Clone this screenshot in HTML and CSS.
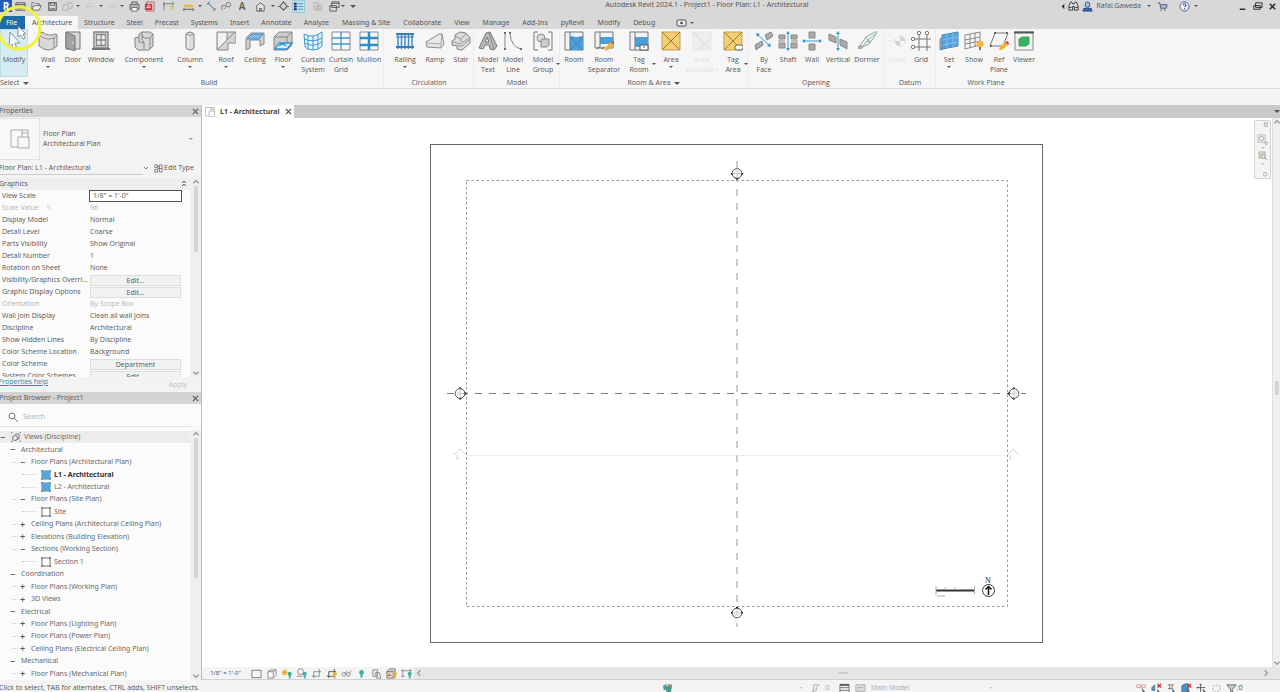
FILE: index.html
```html
<!DOCTYPE html>
<html lang="en">
<head>
<meta charset="utf-8">
<title>Autodesk Revit 2024.1 - Project1 - Floor Plan: L1 - Architectural</title>
<link rel="stylesheet" href="styles.css">
</head>
<body>
<svg class="defs" aria-hidden="true">
  <symbol id="plan" viewBox="0 0 20 20"><path d="M1 1h17v7h1v11H8v-1H1zM12 1v3h6M8 18V8h11M12 4v4" fill="none" stroke="currentColor"/></symbol>
  <symbol id="x" viewBox="0 0 8 8"><path d="M1 1l6 6M7 1L1 7" stroke="currentColor" stroke-width="1.2"/></symbol>
  <symbol id="bulb" viewBox="0 0 5 8"><circle cx="2.5" cy="2.5" r="2.3"/><path d="M1.5 4h2v3.5h-2z"/></symbol>
  <symbol id="elev" viewBox="-10 -10 20 20"><path d="M-6 0L0-6L6 0z" fill="#111" stroke="#111"/><circle r="4.800" fill="#fff" stroke="#444" stroke-width=".9"/><path d="M-4 0H4M0-4V0M-2 2h4" stroke="#aaa" stroke-width=".7"/></symbol>
  <symbol id="sheet" viewBox="0 0 10 10"><rect x="1" y="1" width="8" height="8" fill="#fff" stroke="#999" stroke-width="1.4"/><path d="M0 0h2v2H0zM8 0h2v2H8zM0 8h2v2H0zM8 8h2v2H8z" fill="#888"/></symbol>
  <symbol id="sheet-on" viewBox="0 0 10 10"><rect x="1" y="1" width="8" height="8" fill="#55a8df" stroke="#5f9cc5" stroke-width="1.2"/><path d="M0 0h2v2H0zM8 0h2v2H8zM0 8h2v2H0zM8 8h2v2H8z" fill="#799"/></symbol>
</svg>

<header class="top">
  <div class="titlebar">
    <div class="qat">
      <button class="logo" aria-label="Revit">R</button>
      <button aria-label="Home"><svg viewBox="0 0 12 12"><path d="M1 2h10v8H1zM1 4h10M4 4v6M5 6h5M5 8h5" fill="none" stroke="#555"/></svg></button>
      <button aria-label="Open"><svg viewBox="0 0 12 12"><path d="M1 10V2h3l1 1h4v2M1 10l2-5h8l-2 5z" fill="#eee" stroke="#666"/></svg></button>
      <button aria-label="Save"><svg viewBox="0 0 12 12"><path d="M2 2h8v8H2z" fill="#eee" stroke="#555" stroke-width="1.3"/><path d="M4 2v3h4V2M3.500 8h5" fill="none" stroke="#555"/></svg></button>
      <button class="dim" aria-label="Synchronize"><svg viewBox="0 0 12 12"><path d="M1 4h6v6H1zM5 2h6v6H8" fill="none" stroke="#888"/></svg></button>
      <button class="caret" aria-label="Synchronize options"></button>
      <button class="faint" aria-label="Undo"><svg viewBox="0 0 12 12"><path d="M4 3L1 6l3 2M1 6h9" fill="none" stroke="#888"/></svg></button>
      <button class="caret" aria-label="Undo list"></button>
      <button class="faint" aria-label="Redo"><svg viewBox="0 0 12 12"><path d="M8 3l3 3-3 2M11 6H2" fill="none" stroke="#888"/></svg></button>
      <button class="caret" aria-label="Redo list"></button>
      <button aria-label="Print"><svg viewBox="0 0 12 12"><path d="M3 4V1h6v3M1 4h10v5H1z" fill="#bcbcc8" stroke="#666"/><path d="M3 7h6v4H3z" fill="#fff" stroke="#666"/></svg></button>
      <button aria-label="Export PDF"><svg viewBox="0 0 12 12"><path d="M3 1h8v10H3z" fill="#e8dada" stroke="#a66"/><path d="M1 3h8v7H1z" fill="#cf3a3e"/><path d="M3 8l2-4 2 3H3" fill="none" stroke="#fff" stroke-width=".8"/></svg></button>
      <button aria-label="Measure"><svg viewBox="0 0 12 12"><path d="M1 10V3h10M1 1v4M11 1v4" fill="none" stroke="#777"/><path d="M8 6h3l-1 4" fill="none" stroke="#d9a030"/></svg></button>
      <button aria-label="Measure between"><svg viewBox="0 0 12 12"><path d="M1 4h10v3H1z" fill="#e7b84b"/><path d="M1 9h10M1 8v3M11 8v3" stroke="#555"/></svg></button>
      <button class="caret" aria-label="Measure options"></button>
      <button aria-label="Aligned dimension"><svg viewBox="0 0 12 12"><path d="M2 2l8 8M1 4l3-3M8 11l3-3" stroke="#5a8fb0" stroke-width="1.1"/></svg></button>
      <button aria-label="Tag by category"><svg viewBox="0 0 12 12"><circle cx="8" cy="4" r="2.500" fill="none" stroke="#777"/><path d="M1 10V5h4M6 6L3 9" fill="none" stroke="#777"/></svg></button>
      <button class="text-tool" aria-label="Text">A</button>
      <button aria-label="Default 3D view"><svg viewBox="0 0 12 12"><path d="M1 6l5-4 5 4M2 6v5h8V6M5 11V8h2v3" fill="#e9e9e9" stroke="#555"/></svg></button>
      <button class="caret" aria-label="3D view options"></button>
      <button aria-label="Section"><svg viewBox="0 0 12 12"><path d="M6 1l4 5-4 4-4-4z" fill="none" stroke="#666" stroke-width="1.300"/><path d="M0 6h2M10 6h2" stroke="#666"/></svg></button>
      <button class="on" aria-label="Thin lines"><svg viewBox="0 0 12 12"><path d="M1 3h3M1 6h3M1 9h3" stroke="#226" stroke-width="2"/><path d="M5 3h6M5 6h6M5 9h6" stroke="#4b9bb8"/></svg></button>
      <button class="dim" aria-label="Close inactive views"><svg viewBox="0 0 12 12"><path d="M2 2h5v7H2zM5 5h5v5H5zM6 6l3 3" fill="none" stroke="#888"/></svg></button>
      <button aria-label="Switch windows"><svg viewBox="0 0 12 12"><path d="M3 1h8v6H3zM1 5h7v6H1z" fill="#ddd" stroke="#555"/><path d="M3 2.500h8" stroke="#555"/></svg></button>
      <button class="caret" aria-label="Window list"></button>
      <button class="caret big" aria-label="Customize toolbar"></button>
    </div>
    <h1 class="title">Autodesk Revit 2024.1 - Project1 - Floor Plan: L1 - Architectural</h1>
    <div class="account">
      <button aria-label="Collapse search"><svg viewBox="0 0 12 12"><path d="M8 3v6L5 6z" fill="#333"/></svg></button>
      <button aria-label="Search"><svg viewBox="0 0 12 12"><path d="M1 10V5l2-4h1l1 2h2l1-2h1l2 4v5H7V6H5v4zM1 7h3M8 7h3" fill="#ddd" stroke="#333"/></svg></button>
      <button class="user"><svg viewBox="0 0 12 12"><path d="M3.500 4q0-3 2.500-3t2.500 3-2.500 3-2.500-3z" fill="#a9bfe6" stroke="#2c4c95"/><path d="M1 11l1-3h8l1 3z" fill="#3d66b8" stroke="#24427f"/></svg>Rafal.Gaweda</button>
      <button class="caret" aria-label="Account menu"></button>
      <button class="cart" aria-label="App store"><svg viewBox="0 0 12 12"><path d="M1 2h2l1 6h6l1-4H4" fill="#aab8d6" stroke="#4a5a83"/><path d="M4 10h1M8 10h1" stroke="#334" stroke-width="1.500"/></svg></button>
      <button class="help" aria-label="Help"><svg viewBox="0 0 12 12"><circle cx="6" cy="6" r="5" fill="#f0f3fa" stroke="#445a8c"/><path d="M4.500 4.500q0-1.500 1.500-1.500t1.500 1.500q0 1-1.500 1.800M6 8v1.200" fill="none" stroke="#2d4fa0" stroke-width="1.200"/></svg></button>
      <button class="caret" aria-label="Help menu"></button>
      <button class="win first" aria-label="Minimize"><svg viewBox="0 0 12 12"><path d="M3 9h6" stroke="#222" stroke-width="1.500"/></svg></button>
      <button class="win" aria-label="Restore"><svg viewBox="0 0 12 12"><path d="M4 2h7v5H4zM2 5h7v4H2z" fill="#ddd" stroke="#222"/></svg></button>
      <button class="win" aria-label="Close"><svg viewBox="0 0 12 12"><path d="M3 3l6 6M9 3L3 9" stroke="#222" stroke-width="1.400"/></svg></button>
    </div>
  </div>
  <nav class="tabs">
    <button class="file">File</button>
    <button class="active">Architecture</button>
    <button>Structure</button><button>Steel</button><button>Precast</button><button>Systems</button><button>Insert</button><button>Annotate</button><button>Analyze</button><button>Massing &amp; Site</button><button>Collaborate</button><button>View</button><button>Manage</button><button>Add-Ins</button><button>pyRevit</button><button>Modify</button><button>Debug</button>
    <button class="state" aria-label="Ribbon state"><svg viewBox="0 0 12 8"><rect x="1" y="1" width="9" height="6" rx="1" fill="#eee" stroke="#555"/><circle cx="5.500" cy="4" r="1.200" fill="#333"/></svg><i class="tri"></i></button>
  </nav>
</header>

<section class="ribbon">
  <div class="panel select">
    <div class="tools"><button class="chosen"><svg viewBox="0 0 20 20"><path d="M6 1l10 11-5 0 2 6-3 1-2-6-3 3z" fill="#f4fafc" stroke="#8497a0"/></svg>Modify</button></div>
    <h2>Select <i class="tri big"></i></h2>
  </div>
  <div class="panel build">
    <div class="tools">
      <button><svg viewBox="0 0 20 20"><path d="M1 4l3-3q7 5 13 2l2 1v11q-3 4-9 4-4 0-9-4z" fill="#d9d9d9" stroke="#808080"/><path d="M1 4q7 6 15 3v10M16 7l3-3" fill="none" stroke="#909090"/></svg>Wall<i class="tri"></i></button>
      <button><svg viewBox="0 0 20 20"><path d="M3 1h14v17H3z" fill="#d8d8d8" stroke="#777"/><path d="M3 1l9 4v15l-9-3z" fill="#a2a2a2" stroke="#777"/><path d="M10 11v2" stroke="#eee"/></svg>Door</button>
      <button><svg viewBox="0 0 20 20"><path d="M3 1h14v16H3z" fill="#d9d9d9" stroke="#888" stroke-width="1.500"/><path d="M5.500 3.500h9v11h-9zM10 3v12M5 9h10" fill="#eee" stroke="#888" stroke-width="1.300"/><path d="M1 18h18" stroke="#777" stroke-width="2"/></svg>Window</button>
      <button><svg viewBox="0 0 20 20"><path d="M1 7l4-1V3l3-2h8l3 2v12l-4 4H4l-3-3z" fill="#d8d8d8" stroke="#808080"/><path d="M8 1v8l2 2v7M5 6v5l5 1M10 7h6l3-4M16 7v11M10 7L8 4" fill="none" stroke="#888"/></svg>Component<i class="tri"></i></button>
      <button><svg viewBox="0 0 20 20"><path d="M6 3q4-4 8 0v14q-4 4-8 0z" fill="#ddd" stroke="#808080"/><path d="M8 4v13" stroke="#f6f6f6"/><path d="M6 3q4 3 8 0" fill="none" stroke="#999"/></svg>Column<i class="tri"></i></button>
      <button><svg viewBox="0 0 20 20"><path d="M1 1h19v11h-8v7H1z" fill="#d4d4d4" stroke="#888"/><path d="M2 18V2h9v7z" fill="#f2f2f2"/><path d="M1 19l10-10V1M11 9l8-8" fill="none" stroke="#888"/></svg>Roof<i class="tri"></i></button>
      <button><svg viewBox="0 0 20 20"><path d="M1 7l5-5h13v11l-4 2V9H5v8l-4 2z" fill="#d0d0d0" stroke="#888"/><path d="M2 8l5-5h11l-4 5z" fill="#7fbde6" stroke="#3f8fc5"/></svg>Ceiling</button>
      <button><svg viewBox="0 0 20 20"><path d="M1 6l5-5h13v13l-5 5H1z" fill="#ccc" stroke="#888"/><path d="M1 6h13v6M14 6l5-5" fill="none" stroke="#888"/><path d="M2 18l4-6h13l-5 6zM6 15q4-4 7 0" fill="#d9effb" stroke="#2f91d2" stroke-width="1.300"/></svg>Floor<i class="tri"></i></button>
      <button><svg viewBox="0 0 20 20"><path d="M1 3q9 5 18-2v14q-3 4-9 4T2 16z" fill="#e8f4fb" stroke="#3e96cb"/><path d="M5 4v14M10 5v14M15 3v15M1 8q9 4 18-1M2 12q8 5 17-1" fill="none" stroke="#3e96cb"/></svg>Curtain System</button>
      <button><svg viewBox="0 0 20 20"><path d="M1 1h18v18H1z" fill="#f8f8f8" stroke="#888"/><path d="M1 7h18M1 13h18M10 1v18" stroke="#3f97d0" stroke-width="1.300"/></svg>Curtain Grid</button>
      <button><svg viewBox="0 0 20 20"><path d="M1 1h18v18H1z" fill="#f8f8f8" stroke="#888"/><path d="M1 7h18M1 14h18M10 1v18" stroke="#338bc7" stroke-width="2.500"/></svg>Mullion</button>
    </div>
    <h2>Build</h2>
  </div>
  <div class="panel circulation">
    <div class="tools">
      <button><svg viewBox="0 0 20 20"><path d="M3 3v15M6.500 3v15M10 3v15M13.500 3v15M17 3v15" stroke="#3a8fc9" stroke-width="1.500"/><path d="M1 3h18M1 16h18" stroke="#3a7dad" stroke-width="2"/><path d="M1 6h18" stroke="#3a7dad"/></svg>Railing<i class="tri"></i></button>
      <button><svg viewBox="0 0 20 20"><path d="M1 11l13-8h3l2 10-3 4-14-1z" fill="#e8e8e8" stroke="#888"/><path d="M1 12l15 1 1-10M16 13v4" fill="none" stroke="#aaa"/></svg>Ramp</button>
      <button><svg viewBox="0 0 20 20"><path d="M1 10l3-2 0-4 5-3 6 1 4 5v5l-8 7-5-1v-3l-5-1z" fill="#dcdcdc" stroke="#808080"/><path d="M4 5l6 3 5-5M2 11l7 2 9-6M6 15l5 0 7-6M10 8v3" fill="none" stroke="#999"/></svg>Stair</button>
    </div>
    <h2>Circulation</h2>
  </div>
  <div class="panel model">
    <div class="tools">
      <button><svg viewBox="0 0 20 20"><path d="M8 2l4-1 7 14-3 4-4-1-1-4H7l-2 4-4-1z" fill="#b9b9b9" stroke="#777"/><path d="M9 6l2 5H7z" fill="#eee" stroke="#777"/><path d="M11 2l5 16" stroke="#888"/></svg>Model Text</button>
      <button><svg viewBox="0 0 20 20"><path d="M1 1h2v2H1zM1 17h2v2H1zM6 1h2v2H6zM17 17h2v2h-2z" fill="#666"/><path d="M2 2v16M7 2q1 14 11 16" fill="none" stroke="#888"/></svg>Model Line</button>
      <button class="side"><svg viewBox="0 0 20 20"><path d="M5 1H1v18h4M15 1h4v18h-4" fill="none" stroke="#777"/><circle cx="8" cy="7" r="4" fill="#ddd" stroke="#888"/><path d="M8 9l2-1h6v6l-2 2H8z" fill="#ccc" stroke="#888"/></svg>Model Group<i class="tri"></i></button>
    </div>
    <h2>Model</h2>
  </div>
  <div class="panel room">
    <div class="tools">
      <button><svg viewBox="0 0 20 20"><path d="M1 1h18v18H1z" fill="#f2f2f2" stroke="#777"/><path d="M6 6h13v13H6z" fill="#4b9fda" /><path d="M6 1v18M6 6h4M15 6h4M6 6l13 13M19 6L6 19" fill="none" stroke="#3f7ea9"/></svg>Room</button>
      <button class="wide"><svg viewBox="0 0 20 20"><path d="M1 1h18v16H1z" fill="#f2f2f2" stroke="#777"/><path d="M6 6h13v7H6z" fill="#4b9fda"/><path d="M6 1v16" stroke="#777"/><path d="M3 18l2-2M8 18l2-2" stroke="#6b7b52" stroke-width="1.500"/><path d="M11 17l6-6 3 3-6 5-3 1z" fill="#efb33d"/><path d="M17 11l3-1v4z" fill="#e4433a"/></svg>Room Separator</button>
      <button class="side"><svg viewBox="0 0 20 20"><path d="M1 1h18v18H1z" fill="#f2f2f2" stroke="#777"/><path d="M6 6h13v10H6z" fill="#4b9fda"/><path d="M6 1v18" stroke="#777"/><rect x="11" y="14" width="8" height="5" fill="#fff" stroke="#555"/><path d="M14 16h2" stroke="#555"/></svg>Tag Room<i class="tri"></i></button>
      <button><svg viewBox="0 0 20 20"><path d="M1 1h18v18H1z" fill="#f8ce72" stroke="#bd9f60"/><path d="M1 1l18 18M19 1L1 19" stroke="#9a7c3c"/></svg>Area<i class="tri"></i></button>
      <button class="disabled wide" disabled><svg viewBox="0 0 20 20"><path d="M1 1h18v18H1z" fill="#ccc" stroke="#aaa"/><path d="M1 1l18 18M19 6L6 19" stroke="#999" stroke-width="2"/></svg>Area Boundary</button>
      <button class="side"><svg viewBox="0 0 20 20"><path d="M1 1h18v18H1z" fill="#f8ce72" stroke="#bd9f60"/><path d="M1 1l18 18M19 1L1 19" stroke="#9a7c3c"/><rect x="12" y="14" width="8" height="5" rx="2" fill="#fff" stroke="#666"/></svg>Tag Area<i class="tri"></i></button>
    </div>
    <h2>Room &amp; Area <i class="tri big"></i></h2>
  </div>
  <div class="panel opening">
    <div class="tools">
      <button><svg viewBox="0 0 20 20"><path d="M11 4l6-3 2 4-6 4zM1 14l7-4 1 4-7 5z" fill="#aaa" stroke="#888"/><path d="M3 3l13 12" stroke="#359bcf"/><path d="M2 2l4 1-3 3zM17 16l-4-1 3-3z" fill="#359bcf"/></svg>By Face</button>
      <button><svg viewBox="0 0 20 20"><path d="M1 4h6v4H1zM1 12h6v5H1zM13 4h6v4h-6zM13 12h6v5h-6z" fill="#aaa" stroke="#888"/><path d="M0 10h7M13 10h7" stroke="#888"/><path d="M10 2v16" stroke="#359bcf"/><path d="M10 0l2 3H8zM10 20l2-3H8z" fill="#359bcf"/></svg>Shaft</button>
      <button><svg viewBox="0 0 20 20"><path d="M7 1h6v6H7zM7 13h6v6H7z" fill="#aaa" stroke="#888"/><path d="M1 10h18" stroke="#359bcf"/><path d="M0 10l3-2v4zM20 10l-3-2v4z" fill="#359bcf"/></svg>Wall</button>
      <button><svg viewBox="0 0 20 20"><path d="M1 3l7 3v6l-7-3zM12 8l7 3v7l-7-4z" fill="#aaa" stroke="#888"/><path d="M10 2v16" stroke="#359bcf"/><path d="M10 0l2 3H8zM10 20l2-3H8z" fill="#359bcf"/></svg>Vertical</button>
      <button><svg viewBox="0 0 20 20"><path d="M1 18L9 6l9-5h2l-2 4-6 8zM4 18l6-8 3 2" fill="none" stroke="#94a09c"/><path d="M9 6l4 5M9 11l9-8" stroke="#6fb8b8"/><path d="M1 15l4-1v4H1z" fill="#aaa"/></svg>Dormer</button>
    </div>
    <h2>Opening</h2>
  </div>
  <div class="panel datum">
    <div class="tools">
      <button class="disabled" disabled><svg viewBox="0 0 20 20"><path d="M1 5h5M1 10h8" stroke="#aaa"/><circle cx="13" cy="10" r="5" fill="#fff" stroke="#777"/><path d="M13 10V5a5 5 0 0 1 5 5zM13 10v5a5 5 0 0 1-5-5z" fill="#333"/></svg>Level</button>
      <button><svg viewBox="0 0 20 20"><path d="M8 4v16M16 4v16M4 8h16M4 16h16" stroke="#777"/><g fill="#fff" stroke="#777"><circle cx="8" cy="2" r="1.700"/><circle cx="16" cy="2" r="1.700"/><circle cx="2" cy="8" r="1.700"/><circle cx="2" cy="16" r="1.700"/></g></svg>Grid</button>
    </div>
    <h2>Datum</h2>
  </div>
  <div class="panel workplane">
    <div class="tools">
      <button><svg viewBox="0 0 20 20"><path d="M1 8l14-6v12L1 19z" fill="#a6b9c6" stroke="#789"/><path d="M3 4l16-3v14L3 18z" fill="#4c9fd9" fill-opacity=".9" stroke="#3f88bd"/><path d="M8 3v14M14 2v14M3 9l16-3M3 14l16-3" stroke="#8cc7ec" stroke-width=".8"/></svg>Set<i class="tri"></i></button>
      <button><svg viewBox="0 0 20 20"><path d="M1 4l15-3v13L1 18zM6 3v14M11 2v14M1 9l15-3M1 13l15-3" fill="none" stroke="#888"/><circle cx="16" cy="13" r="3.500" fill="#f5b63b"/><path d="M15 16h2v3h-2z" fill="#777"/></svg>Show</button>
      <button><svg viewBox="0 0 20 20"><path d="M6 2h13l-5 13H1z" fill="none" stroke="#777"/><path d="M5 1h2v2H5zM17 1h2v2h-2zM1 14h2v2H1z" fill="#666"/><path d="M10 19l1-3 5-5 3 3-6 5z" fill="#eeb43d"/><path d="M16 11l3-1 1 3-1 1z" fill="#e03c37"/></svg>Ref Plane</button>
      <button><svg viewBox="0 0 20 20"><path d="M1 1h18v18H1z" fill="#f4f4f4" stroke="#888"/><path d="M0 1.500h20" stroke="#555" stroke-width="2"/><path d="M5 8l3-2h7v7l-3 2H5z" fill="#35b461" stroke="#39a761"/></svg>Viewer</button>
    </div>
    <h2>Work Plane</h2>
  </div>
</section>
<div class="options"></div>

<main class="work">
  <aside class="side-dock">
    <section class="properties">
      <header class="dock-head"><h2>Properties</h2><button aria-label="Close properties"><svg><use href="#x"/></svg></button></header>
      <button class="type"><span class="thumb"><svg><use href="#plan"/></svg></span><span class="type-name">Floor Plan<br>Architectural Plan</span><i class="tri"></i></button>
      <div class="instance">
        <select aria-label="Instance"><option>Floor Plan: L1 - Architectural</option></select>
        <svg class="chev" viewBox="0 0 6 6"><path d="M1 2l2 2 2-2" fill="none" stroke="#777"/></svg>
        <button class="edit-type"><svg viewBox="0 0 10 10"><path d="M1 1h3v3H1zM1 6h3v3H1zM6 1h3v8H6zM4 5h5M4 3h2" fill="none" stroke="#777"/></svg>Edit Type</button>
      </div>
      <div class="params">
        <div class="param-list">
          <div class="group"><span>Graphics</span><svg viewBox="0 0 6 6"><path d="M1 3l2-2 2 2M1 6l2-2 2 2" fill="none" stroke="#555"/></svg></div>
          <table>
            <tr><th><label for="scale">View Scale</label></th><td><input id="scale" value="1/8&quot; = 1'-0&quot;"></td></tr>
            <tr class="off"><th>Scale Value &nbsp;&nbsp; 1:</th><td>96</td></tr>
            <tr><th>Display Model</th><td>Normal</td></tr>
            <tr><th>Detail Level</th><td>Coarse</td></tr>
            <tr><th>Parts Visibility</th><td>Show Original</td></tr>
            <tr><th>Detail Number</th><td>1</td></tr>
            <tr><th>Rotation on Sheet</th><td>None</td></tr>
            <tr><th>Visibility/Graphics Overri...</th><td><button>Edit...</button></td></tr>
            <tr><th>Graphic Display Options</th><td><button>Edit...</button></td></tr>
            <tr class="off"><th>Orientation</th><td>By Scope Box</td></tr>
            <tr><th>Wall Join Display</th><td>Clean all wall joins</td></tr>
            <tr><th>Discipline</th><td>Architectural</td></tr>
            <tr><th>Show Hidden Lines</th><td>By Discipline</td></tr>
            <tr><th>Color Scheme Location</th><td>Background</td></tr>
            <tr><th>Color Scheme</th><td><button>Department</button></td></tr>
            <tr><th>System Color Schemes</th><td><button>Edit...</button></td></tr>
          </table>
        </div>
        <div class="vbar short"><svg viewBox="0 0 6 6"><path d="M1 4l2-2 2 2"/></svg><span></span><svg viewBox="0 0 6 6"><path d="M1 2l2 2 2-2"/></svg></div>
      </div>
      <footer class="prop-foot"><a href="#help">Properties help</a><button disabled>Apply</button></footer>
    </section>
    <section class="browser">
      <header class="dock-head"><h2>Project Browser - Project1</h2><button aria-label="Close browser"><svg><use href="#x"/></svg></button></header>
      <label class="search"><svg viewBox="0 0 10 10"><circle cx="4" cy="4" r="3" fill="none" stroke="#777"/><path d="M6 6l4 4" stroke="#777"/></svg><input type="search" placeholder="Search" aria-label="Search"></label>
      <div class="tree-wrap">
        <ul class="tree">
          <li class="l0 root"><b>−</b><svg viewBox="0 0 10 10"><path d="M0 2V0h2M8 0h2v2M10 8v2H8M2 10H0V8" fill="none" stroke="#888"/><circle cx="4" cy="6" r="2.500" fill="none" stroke="#777"/><path d="M4 2h4v5H6" fill="none" stroke="#777"/></svg>Views (Discipline)</li>
          <li class="l1"><b>−</b>Architectural</li>
          <li class="l2"><b>−</b>Floor Plans (Architectural Plan)</li>
          <li class="l3 current"><svg><use href="#sheet-on"/></svg>L1 - Architectural</li>
          <li class="l3"><svg><use href="#sheet-on"/></svg>L2 - Architectural</li>
          <li class="l2"><b>−</b>Floor Plans (Site Plan)</li>
          <li class="l3"><svg><use href="#sheet"/></svg>Site</li>
          <li class="l2"><b>+</b>Ceiling Plans (Architectural Ceiling Plan)</li>
          <li class="l2"><b>+</b>Elevations (Building Elevation)</li>
          <li class="l2"><b>−</b>Sections (Working Section)</li>
          <li class="l3"><svg><use href="#sheet"/></svg>Section 1</li>
          <li class="l1"><b>−</b>Coordination</li>
          <li class="l2"><b>+</b>Floor Plans (Working Plan)</li>
          <li class="l2"><b>+</b>3D Views</li>
          <li class="l1"><b>−</b>Electrical</li>
          <li class="l2"><b>+</b>Floor Plans (Lighting Plan)</li>
          <li class="l2"><b>+</b>Floor Plans (Power Plan)</li>
          <li class="l2"><b>+</b>Ceiling Plans (Electrical Ceiling Plan)</li>
          <li class="l1"><b>−</b>Mechanical</li>
          <li class="l2"><b>+</b>Floor Plans (Mechanical Plan)</li>
        </ul>
        <div class="vbar mid"><svg viewBox="0 0 6 6"><path d="M1 4l2-2 2 2"/></svg><span></span><svg viewBox="0 0 6 6"><path d="M1 2l2 2 2-2"/></svg></div>
      </div>
    </section>
  </aside>

  <section class="view">
    <div class="view-tabs">
      <div class="view-tab"><svg class="plan"><use href="#plan"/></svg><span>L1 - Architectural</span><button aria-label="Close view"><svg><use href="#x"/></svg></button></div>
      <button class="caret big" aria-label="Tab list"></button>
    </div>
    <div class="view-body">
      <div class="canvas">
        <svg class="drawing" viewBox="430 143 614 500">
          <rect x="430.500" y="144.500" width="612" height="498" fill="none" stroke="#666"/>
          <rect x="466.500" y="180.500" width="541" height="426" fill="none" stroke="#999" stroke-dasharray="2.500 2.500"/>
          <path d="M447 393.500h579" stroke="#7c7c7c" stroke-dasharray="7 7"/>
          <path d="M737 161v466" stroke="#999" stroke-dasharray="7 7"/>
          <path d="M467 455.500h540" stroke="#ddd" stroke-dasharray="1 1"/>
          <path d="M454 455l6-6 6 6M457 455v4h2M1007 455l6-6 6 6M1010 455v4h2" fill="none" stroke="#ddd0cc"/>
          <use href="#elev" x="-10" y="-10" width="20" height="20" transform="translate(737 173.500) rotate(180)"/>
          <use href="#elev" x="-10" y="-10" width="20" height="20" transform="translate(737 613)"/>
          <use href="#elev" x="-10" y="-10" width="20" height="20" transform="translate(460 393.500) rotate(90)"/>
          <use href="#elev" x="-10" y="-10" width="20" height="20" transform="translate(1014 393.500) rotate(-90)"/>
          <path d="M936 590.500h39" stroke="#333" stroke-width="2"/>
          <path d="M936 586v9M945 587v3M955 587v3M974.500 586v8M937 596h8" stroke="#aaa" fill="none"/>
          <text x="988" y="583" text-anchor="middle" class="north">N</text>
          <circle cx="988.500" cy="590.500" r="6" fill="#fff" stroke="#333"/>
          <path d="M988.500 595v-8M985.500 589.500l3-3 3 3" fill="none" stroke="#111" stroke-width="1.500"/>
        </svg>
        <div class="navbar">
          <button aria-label="Close navigation bar"><svg viewBox="0 0 12 12"><path d="M8 2h4v4H8zM9 3l2 2" fill="none" stroke="#aaa"/></svg></button>
          <button aria-label="Steering wheel"><svg viewBox="0 0 12 12"><path d="M1 1h8v8H1z" fill="none" stroke="#bbb"/><circle cx="5" cy="5" r="2.500" fill="none" stroke="#9aabb8"/><circle cx="10" cy="10" r="1.500" fill="none" stroke="#aaa"/></svg></button>
          <i class="tri"></i>
          <button aria-label="Zoom"><svg viewBox="0 0 12 12"><path d="M2 2h7v7H2z" fill="#d6d3b8" stroke="#c0c0aa"/><circle cx="7" cy="7" r="2" fill="#eee" stroke="#999"/><path d="M8 8l3 3" stroke="#999"/></svg></button>
          <i class="tri"></i>
          <button aria-label="Navigation bar options"><svg viewBox="0 0 12 12"><circle cx="9" cy="8" r="2" fill="none" stroke="#aaa"/></svg></button>
        </div>
      </div>
      <div class="vbar tall"><svg viewBox="0 0 6 6"><path d="M1 4l2-2 2 2"/></svg><span></span><svg viewBox="0 0 6 6"><path d="M1 2l2 2 2-2"/></svg></div>
    </div>
    <div class="view-bar">
      <div class="view-tools">
        <button class="scale">1/8" = 1'-0"</button>
        <button aria-label="Detail level"><svg viewBox="0 0 12 12"><path d="M1 2.500h10v8H1z" fill="#f6f6f6" stroke="#777"/></svg></button>
        <button aria-label="Visual style"><svg viewBox="0 0 12 12"><path d="M2 4h6v7H2zM2 4l3-2h6v6l-3 3M8 4l3-2" fill="#f6f6f6" stroke="#888"/></svg></button>
        <button aria-label="Sun path"><svg viewBox="0 0 12 12"><circle cx="4" cy="5" r="2.600" fill="#e9b02f"/><path d="M0 5h8M4 1v8M1 2l6 6M7 2L1 8" stroke="#e9b02f" stroke-width=".6"/><use href="#bulb" x="7" y="4" width="5" height="8" fill="#3fb0a3"/></svg></button>
        <button aria-label="Shadows"><svg viewBox="0 0 12 12"><circle cx="5" cy="4" r="3.300" fill="#eee" stroke="#888"/><path d="M1 9h6" stroke="#888"/><use href="#bulb" x="7" y="4" width="5" height="8" fill="#3fb0a3"/></svg></button>
        <button aria-label="Crop view"><svg viewBox="0 0 12 12"><path d="M3 11V4h8M1 9h8V1" fill="none" stroke="#888"/></svg></button>
        <button aria-label="Show crop region"><svg viewBox="0 0 12 12"><path d="M3 11V4h8M1 9h8V1" fill="none" stroke="#555"/><use href="#bulb" x="7" y="4" width="5" height="8" fill="#e3b244"/></svg></button>
        <button aria-label="Temporary hide"><svg viewBox="0 0 12 12"><circle cx="3" cy="7" r="2" fill="none" stroke="#888"/><circle cx="8" cy="7" r="2" fill="none" stroke="#888"/><path d="M4 6l3-3M9 6l2-3" stroke="#888"/></svg></button>
        <button aria-label="Reveal hidden"><svg viewBox="0 0 12 12"><use href="#bulb" x="3" y="2" width="6" height="9" fill="#3fb0a3"/></svg></button>
        <button aria-label="Temporary view properties"><svg viewBox="0 0 12 12"><path d="M2 2h5v7H2zM5 5h4l2 6H6z" fill="#eee" stroke="#888"/></svg></button>
        <button aria-label="Analytical model"><svg viewBox="0 0 12 12"><path d="M1 4h7v7H1zM1 4l3-3h6v6M3 6l3 3" fill="#ddd" stroke="#766"/><path d="M2 8h3" stroke="#b44"/><use href="#bulb" x="7" y="4" width="5" height="8" fill="#e3b244"/></svg></button>
        <button aria-label="Constraints"><svg viewBox="0 0 12 12"><path d="M2 1v9M0 3h12M10 1v4M0 9h4" fill="none" stroke="#888"/><use href="#bulb" x="7" y="4" width="5" height="8" fill="#3fb0a3"/></svg></button>
      </div>
      <div class="hbar"><svg viewBox="0 0 6 6"><path d="M4 1L2 3l2 2"/></svg><span></span><svg viewBox="0 0 6 6"><path d="M2 1l2 2-2 2"/></svg></div>
    </div>
  </section>
</main>

<footer class="status">
  <span class="hint">Click to select, TAB for alternates, CTRL adds, SHIFT unselects.</span>
  <span class="sync"><svg viewBox="0 0 12 12"><path d="M1 3l4-2v6l-3 1z" fill="#5d93a8"/><path d="M6 1l5 1v5H7z" fill="#c47d7d"/><path d="M4 4l5-1 1 7-5 1z" fill="#35a38d"/></svg></span>
  <span class="worksets"><i class="tri"></i><svg viewBox="0 0 12 12"><path d="M1 11l4-5M4 2h6L7 5v3l-3 3z" fill="none" stroke="#aaa"/></svg><span>:0</span></span>
  <span class="model-opt"><svg viewBox="0 0 12 12"><path d="M1 2h10v9H1zM1 5h10M1 8h10" fill="#eee" stroke="#777"/><path d="M1 2h10" stroke="#555" stroke-width="2"/></svg><svg viewBox="0 0 12 12"><path d="M1 2h10v7H1zM2 11h8M3 5h6" fill="#ddd" stroke="#aaa"/></svg><button disabled>Main Model</button><i class="tri"></i></span>
  <span class="filters">
    <button aria-label="Select links"><svg viewBox="0 0 12 12"><path d="M1 2h4v3H1zM6 2h4v3H6z" fill="none" stroke="#d99c9c"/><path d="M6 5l4 5H8v2z" fill="#555"/></svg></button>
    <button aria-label="Select underlay"><svg viewBox="0 0 12 12"><path d="M1 5l3-3v6H1z" fill="#469bc5" stroke="#58798c"/><path d="M7 1l4 4M11 1L7 5" stroke="#cf3131" stroke-width="1.500"/><path d="M6 6l4 4H8v2z" fill="#555"/></svg></button>
    <button aria-label="Select pinned"><svg viewBox="0 0 12 12"><path d="M2 2h5M4 2v5M2 6h5" stroke="#777"/><path d="M8 1l-2 5" stroke="#c55"/><path d="M6 5l4 5H8v2z" fill="#555"/></svg></button>
    <button aria-label="Select by face"><svg viewBox="0 0 12 12"><path d="M1 3l3-2h4v8l-3 3H1z" fill="#4593c9" stroke="#568"/><path d="M7 1l4 4M11 1L7 5" stroke="#cf3131" stroke-width="1.500"/><path d="M6 6l4 4H8v2z" fill="#555"/></svg></button>
    <button aria-label="Drag elements"><svg viewBox="0 0 12 12"><path d="M5 1v9M1 5h9M4 2l1-1 1 1M2 4L1 5l1 1" fill="none" stroke="#555"/><path d="M7 6l4 4H9v2z" fill="#444"/></svg></button>
    <button aria-label="Background processes"><svg viewBox="0 0 12 12"><circle cx="6" cy="6" r="4" fill="none" stroke="#bbb" stroke-width="1.500" stroke-dasharray="2 1.500"/></svg></button>
    <button class="filter"><svg viewBox="0 0 12 12"><path d="M1 2h10L7 7v4H5V7z" fill="#ccc" stroke="#666"/></svg>:0</button>
  </span>
</footer>

<svg class="pointer" viewBox="0 0 48 48" aria-hidden="true"><circle cx="24" cy="24" r="21" fill="none" stroke="#f1f23c" stroke-width="3"/><path d="M23 22v11l3-2 2 4 2-1-2-4h3z" fill="#fff" stroke="#777" stroke-width=".8"/></svg>
</body>
</html>
```
FILE: styles.css
```css
* { box-sizing: border-box; }
body {
  margin: 0;
  height: 100vh;
  display: flex;
  flex-direction: column;
  overflow: hidden;
  position: relative;
  font: 7px/10px "Open Sans", "Noto Sans", sans-serif;
  color: #555;
  background: #f5f5f5;
}
h1, h2 { margin: 0; font-size: inherit; font-weight: 400; }
button, input, select {
  font: inherit;
  color: inherit;
  border: 0;
  padding: 0;
  margin: 0;
  background: none;
  border-radius: 0;
}
svg { display: block; flex: none; }
.defs { position: absolute; width: 0; height: 0; }

/* drop-down arrows */
.tri, .caret::after {
  content: "";
  display: inline-block;
  flex: none;
  border: 2px solid transparent;
  border-top-color: #555;
  border-bottom: 0;
}
.tri.big, .caret.big::after { border-width: 3px; border-bottom: 0; }
.caret { display: flex; align-items: center; justify-content: center; }

/* title bar */
.top { background: #d9d8d9; }
.titlebar {
  height: 16px;
  display: grid;
  grid-template-columns: 1fr auto 1fr;
}
.qat {
  display: grid;
  grid-template-columns: 12px 16px 16px 16px 14px 8px 16px 6px 14px 8px 16px 14px 24px 16px 8px 14px 16px 16px 20px 6px 14px 16px 22px 12px 6px 14px;
  height: 12px;
  align-items: center;
  justify-items: center;
}
.qat svg, .account svg { width: 11px; height: 11px; }
.qat .logo { background: #1f5fb8; color: #fff; font-weight: 700; font-size: 10px; width: 12px; height: 12px; }
.qat .text-tool { font-weight: 600; font-size: 10px; }
.qat .on { background: #bfe0ea; outline: 1px solid #9ccbd9; }
.dim { opacity: .5; }
.faint { opacity: .2; }
.title { line-height: 9px; padding-left: 134px; white-space: nowrap; font-family: "Noto Sans", sans-serif; }
.account { display: flex; align-items: center; justify-content: flex-end; height: 12px; }
.account button { flex: none; display: flex; align-items: center; justify-content: center; }
.account .user { gap: 3px; margin-left: 3px; }
.account .caret { width: 16px; }
.account .cart { margin-right: 11px; }
.account .help + .caret { width: 12px; }
.account .win { width: 15px; }
.account .first { margin-left: 33px; }

/* ribbon tabs */
.tabs { display: flex; height: 13px; font-family: "Noto Sans", sans-serif; }
.tabs button { padding: 0 6px; line-height: 13px; }
.tabs .file { width: 25px; background: #1c6da6; color: #fff; padding: 0 2px 0 0; }
.tabs .active { background: #f6f6f6; padding-left: 7px; }
.tabs button:nth-child(n+10) { padding-left: 7px; }
.tabs .state { display: flex; align-items: center; gap: 2px; margin-left: 8px; }
.state svg { width: 12px; height: 8px; }

/* ribbon */
.ribbon { display: flex; height: 60px; background: #f6f6f6; border-bottom: 1px solid #dcdcdc; }
.panel { display: flex; flex-direction: column; box-shadow: inset -1px 0 #ededed; }
.panel:last-child { box-shadow: none; }
.tools { display: grid; flex: 1; }
.tools button {
  position: relative;
  display: flex;
  flex-direction: column;
  align-items: center;
  padding-top: 2px;
  text-align: center;
}
.tools svg { width: 20px; height: 20px; margin-bottom: 4px; }
.tools .tri { margin-top: 1px; }
.tools .side { padding-left: 4px; padding-right: 4px; }
.side .tri { position: absolute; right: 0; top: 33px; }
.tools .disabled { opacity: .18; color: #777; }
.tools .chosen { background: #d6ecf2; outline: 1px solid #b9dde6; outline-offset: -1px; }
.panel h2 { text-align: center; height: 11px; line-height: 11px; }
.panel .big { vertical-align: middle; margin-left: 2px; }
.select .tools { grid-template-columns: 28px; }
.select h2 { text-align: left; }
.select { box-shadow: none; width: 34px; }
.build .tools { grid-template-columns: 28px 22px 34px 52px 40px 32px 26px 30px 30px 26px 30px; }
.circulation .tools { grid-template-columns: 30px 30px 22px; padding: 0 2px 0 6px; }
.model .tools { grid-template-columns: 24px 26px 34px; padding-left: 2px; }
.room .tools { grid-template-columns: 24px 36px 34px 30px 32px 30px; padding-left: 2px; }
.opening .tools { grid-template-columns: 24px 24px 24px 28px 30px; padding: 0 2px 0 4px; }
.datum .tools { grid-template-columns: 22px 26px; padding: 0 2px; }
.workplane .tools { grid-template-columns: 26px 24px 26px 24px; }
.options { height: 16px; background: #f5f5f5; }

/* docked palettes */
.work { flex: 1; display: flex; min-height: 0; }
.side-dock { width: 202px; display: flex; flex-direction: column; border-right: 1px solid #bdbdbd; background: #f3f3f3; }
.dock-head { display: flex; justify-content: space-between; align-items: center; height: 12px; padding-right: 2px; background: #d4d4d4; }
.dock-head h2 { text-indent: -1px; }
.dock-head svg { width: 7px; height: 7px; }
.properties { height: 287px; display: flex; flex-direction: column; }
.type { display: flex; align-items: center; height: 44px; text-align: left; padding-right: 8px; flex: none; }
.type .tri { border-top-color: #999; }
.thumb { width: 40px; height: 42px; display: flex; align-items: center; justify-content: center; background: #f8f8f8; border: 1px solid #e2e2e2; border-left: 0; color: #aaa; }
.thumb svg { width: 20px; height: 20px; }
.type-name { flex: 1; margin-left: 3px; }
.instance { display: flex; align-items: center; height: 14px; flex: none; }
.instance select { appearance: none; width: 143px; height: 14px; border-bottom: 1px solid #ccc; text-indent: -1px; }
.chev { width: 6px; height: 6px; }
.edit-type { display: flex; align-items: center; gap: 1px; margin-left: 5px; white-space: nowrap; }
.edit-type svg { width: 9px; height: 9px; }
.group { display: flex; justify-content: space-between; height: 12px; padding-right: 3px; background: #eee; text-indent: -1px; line-height: 12px; }
.group svg { width: 6px; height: 6px; margin-top: 2px; }
.params { display: flex; height: 199px; margin-top: 3px; overflow: hidden; background: #fbfbfb; flex: none; }
.param-list { width: 190px; }
.params table { width: 100%; border-collapse: collapse; table-layout: fixed; height: 192px; }
.params tr { height: 12px; }
.params th { width: 88px; font-weight: 400; text-align: left; padding: 0 0 0 2px; white-space: nowrap; height: 12px; line-height: 12px; }
.params td { padding: 0 9px 0 2px; white-space: nowrap; height: 12px; line-height: 12px; }
.params input { width: 93px; height: 12px; border: 1px solid #555; padding: 0 3px; background: #fff; display: block; margin-left: -1px; }
.params td button { display: block; width: 91px; height: 11px; line-height: 9px; border: 1px solid #ddd; background: #f2f2f2; }
.params .off { color: #b4b4b4; }
.prop-foot { display: flex; justify-content: space-between; height: 15px; padding-right: 14px; flex: none; }
.prop-foot a { color: #2b8ca5; text-indent: -2px; }
.prop-foot button { color: #c0c0c0; }
.browser { flex: 1; display: flex; flex-direction: column; min-height: 0; background: #fbfbfb; }
.search { display: flex; align-items: center; height: 20px; margin: 3px 8px 3px 0; padding-left: 8px; gap: 5px; border-bottom: 1px solid #e6e6e6; flex: none; }
.search svg { width: 10px; height: 10px; }
.search input { flex: 1; min-width: 0; }
.search input::placeholder { color: #b0b0b0; }
.tree-wrap { flex: 1; display: flex; min-height: 0; }
.tree { list-style: none; margin: 0; padding: 1px 0 0; flex: 1; display: grid; grid-template-rows: repeat(20, 1fr); color: #6a6a6a; font-family: "Noto Sans", sans-serif; }
.tree li { display: flex; align-items: center; white-space: nowrap; min-height: 0; position: relative; }
.tree b { width: 11px; font-size: 9px; line-height: 9px; color: #555; font-weight: 600; }
.tree svg { width: 10px; height: 10px; margin-right: 3px; }
.tree .root { background: #ececec; }
.tree .l1 { padding-left: 10px; }
.tree .l2 { padding-left: 20px; }
.tree .l3 { padding-left: 41px; }
.l3::before { content: ""; position: absolute; left: 22px; width: 14px; border-top: 1px dotted #ccc; }
.l2::before { content: ""; position: absolute; left: 12px; width: 6px; border-top: 1px dotted #ccc; }
.tree .current { font-weight: 700; color: #333; }

/* scroll bars */
.vbar { width: 11px; display: flex; flex-direction: column; align-items: center; background: #efefef; }
.vbar svg, .hbar svg { width: 8px; height: 8px; fill: none; stroke: #999; }
.vbar span { width: 4px; background: #d4d4d4; }
.vbar svg:last-child { margin-top: auto; }
.short span { height: 66px; }
.mid span { height: 140px; }
.tall { width: 8px; border-left: 1px solid #e0e0e0; }
.tall span { margin-top: 255px; height: 14px; }

/* drawing view */
.view { flex: 1; min-width: 0; display: flex; flex-direction: column; }
.view-tabs { height: 13px; display: flex; justify-content: space-between; background: #cacaca; }
.view-tab { display: flex; align-items: center; background: #fff; padding: 0 2px 0 3px; font-weight: 700; font-family: "Noto Sans", sans-serif; gap: 5px; color: #444; }
.view-tab svg { width: 7px; height: 7px; }
.view-tab .plan { width: 10px; height: 10px; color: #888; }
.view-body { flex: 1; display: flex; min-height: 0; }
.canvas { flex: 1; position: relative; display: flex; align-items: center; justify-content: center; background: #fff; }
.drawing { width: 614px; height: 500px; }
.north { font: 8px "Liberation Serif", serif; fill: #222; }
.navbar { position: absolute; top: 2px; right: 1px; width: 17px; height: 59px; display: flex; flex-direction: column; align-items: center; justify-content: space-between; background: #f4f4f4; border: 1px solid #d0d0d0; border-radius: 2px; }
.navbar svg { width: 11px; height: 11px; }
.navbar .tri { border-top-color: #bbb; }
.view-bar { display: flex; height: 13px; background: #e6e6e6; border-bottom: 1px solid #d0d0d0; }
.view-tools { display: grid; grid-template-columns: 47px repeat(11, 15px); align-items: center; justify-items: center; background: #f4f4f4; }
.view-tools svg { width: 11px; height: 11px; }
.scale { font: 6px/10px "Noto Sans", sans-serif; white-space: nowrap; }
.hbar { flex: 1; display: flex; align-items: center; justify-content: space-between; padding: 0 10px 0 1px; }
.hbar span { width: 10px; height: 2px; background: #ccc; }

/* status bar */
.status { display: flex; align-items: center; height: 12px; background: #f4f4f4; white-space: nowrap; padding-top: 4px; }
.status svg { width: 11px; height: 11px; }
.status button { display: flex; align-items: center; }
.hint { flex: 0 0 662px; text-indent: -1px; }
.sync { flex: 1 0 137px; }
.worksets, .model-opt { display: flex; align-items: center; color: #aaa; }
.worksets { flex: 0 0 40px; gap: 3px; }
.worksets svg { margin-left: 4px; }
.worksets .tri, .model-opt .tri { border-top-color: #ccc; }
.model-opt { gap: 5px; flex: 0 0 297px; }
.model-opt .tri { margin-left: 74px; }
.filters { display: grid; grid-template-columns: repeat(6, 15px) 54px; }

/* highlighted mouse pointer */
.pointer { position: absolute; left: -5px; top: 4px; width: 48px; height: 48px; pointer-events: none; }
```
